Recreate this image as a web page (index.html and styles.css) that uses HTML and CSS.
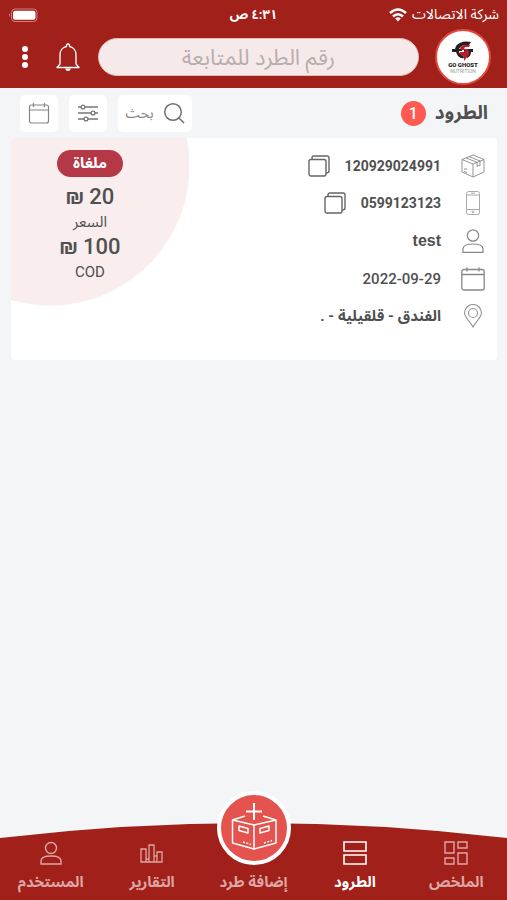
FILE: index.html
```html
<!DOCTYPE html>
<html lang="ar" dir="rtl">
<head>
<meta charset="utf-8">
<meta name="viewport" content="width=device-width, initial-scale=1">
<title>الطرود</title>
<link rel="stylesheet" href="styles.css">
</head>
<body>
<header class="header">
  <div class="status">
    <div class="carrier"><span>شركة الاتصالات</span>
      <svg class="wifi" width="18" height="14" viewBox="0 0 18 14" fill="none" stroke="#fff" stroke-width="2.6"><path d="M1 5Q9-2 17 5M4 8.500Q9 4 14 8.500"/><path d="M6.200 10.500Q9 8 11.800 10.500L9 13.500z" fill="#fff" stroke="none"/></svg>
    </div>
    <time class="clock">٤:٣١ ص</time>
    <svg class="battery" width="30" height="14" viewBox="0 0 30 14"><rect x="3.500" y="1" width="25.500" height="12.500" rx="3.500" fill="none" stroke="#d0827c"/><rect x="5" y="2.700" width="22.500" height="9" rx="2" fill="#fff"/><path d="M2 5Q0 7 2 9z" fill="#d0827c"/></svg>
  </div>
  <div class="toolbar">
    <a class="avatar" href="#" aria-label="GO GHOST">
      <svg width="22" height="20" viewBox="0 0 22 20"><path d="M19 1Q9-1 4 5L3 8H0V11H4L6 15Q9 18 12 17L11 14Q7 13 7 10H10V8H7Q9 4 14 4H17z" fill="#222"/><path d="M12 8H21V11H19Q19 15 15 17L14 14Q16 13 16 11H12z" fill="#222"/><path d="M18 4Q10 3 8 7L9 9H13L12 11H8Q8 15 12 16V20L15 16Q18 13 17 10L15 8H12L13 6H17z" fill="#b51f2a"/></svg>
      <span class="brand">GO GHOST</span><span class="brand-sub">NUTRITION</span>
    </a>
    <input class="track" type="text" placeholder="رقم الطرد للمتابعة" aria-label="رقم الطرد للمتابعة">
    <button class="bare" aria-label="الإشعارات"><svg width="24" height="28" viewBox="0 0 24 28" fill="none" stroke="#fff" stroke-width="1.300" stroke-linejoin="round"><path d="M1 24.500H23L20 21V12C20 7 17 4 13.500 3.500V2Q12 0 10.500 2V3.500C7 4 4 7 4 12V21z"/><path d="M9 25.500H15Q14 28 12 28T9 25.500z" fill="#fff" stroke="none"/></svg></button>
    <button class="bare dots" aria-label="المزيد"><svg width="8" height="24" viewBox="0 0 8 24" fill="#fff"><circle cx="4" cy="4" r="3"/><circle cx="4" cy="12" r="3"/><circle cx="4" cy="20" r="3"/></svg></button>
  </div>
</header>
<main class="content">
  <div class="heading">
    <h1>الطرود</h1><span class="count">1</span>
    <div class="actions">
      <button class="tool search"><svg width="22" height="22" viewBox="0 0 22 22" fill="none" stroke="#6e6e6e" stroke-width="1.500"><circle cx="10" cy="10" r="8.300"/><path d="M16 16L21 21"/></svg><span>بحث</span></button>
      <button class="tool" aria-label="تصفية"><svg width="20" height="20" viewBox="0 0 20 20" fill="#fff" stroke="#777" stroke-width="1.300"><path d="M0 4H20M0 10H20M0 16H20"/><circle cx="5" cy="4" r="1.900"/><circle cx="15" cy="10" r="1.900"/><circle cx="8" cy="16" r="1.900"/></svg></button>
      <button class="tool" aria-label="التاريخ"><svg width="22" height="22" viewBox="0 0 22 22" fill="none" stroke="#858585" stroke-width="1.200"><rect x="1.500" y="3" width="19" height="18" rx="2"/><path d="M1.500 8H20.500M5.500 1V5M16.500 1V5"/></svg></button>
    </div>
  </div>
  <article class="card">
    <ul class="details">
      <li><svg class="icon" viewBox="0 0 24 24" fill="none" stroke="#888" stroke-width=".9" stroke-linejoin="round"><path d="M12 1L23 5.500V18L12 23L1 18V5.500zM1 5.500L12 10L23 5.500M12 10V23M5 4L16 8.300M8 2.600L19 7M16 8.300V12.500L17.500 11.500L19 11.800V7M3 15H6M3 17.500L6 18.500"/></svg><b class="number">120929024991</b><button class="bare copy" aria-label="نسخ رقم الطرد"><svg width="22" height="22" viewBox="0 0 22 22" fill="none" stroke="#666" stroke-width="1.400"><rect x="1" y="4.500" width="17" height="16.500" rx="2"/><path d="M4 4V3Q4 1 6 1H19Q21 1 21 3V16Q21 18 18 18"/></svg></button></li>
      <li><svg class="icon" viewBox="0 0 24 24" fill="none" stroke="#aaa" stroke-width="1"><rect x="5.500" y=".5" width="13" height="23" rx="2"/><path d="M5.500 4H18.500M5.500 18.500H18.500M10 2.200H14"/><circle cx="12" cy="21" r="1"/></svg><b class="number">0599123123</b><button class="bare copy" aria-label="نسخ رقم الهاتف"><svg width="22" height="22" viewBox="0 0 22 22" fill="none" stroke="#666" stroke-width="1.400"><rect x="1" y="4.500" width="17" height="16.500" rx="2"/><path d="M4 4V3Q4 1 6 1H19Q21 1 21 3V16Q21 18 18 18"/></svg></button></li>
      <li><svg class="icon" viewBox="0 0 24 24" fill="none" stroke="#888" stroke-width="1.200"><circle cx="12" cy="6.500" r="5.700"/><path d="M2 23.300V20C2 16.500 6 15 12 15S22 16.500 22 20V23.300z"/></svg><b class="latin">test</b></li>
      <li><svg class="icon" viewBox="0 0 24 24" fill="none" stroke="#888" stroke-width="1.300"><rect x=".8" y="2.500" width="22.400" height="20.500" rx="2"/><path d="M1 7.500H23M6 .5V4.500M18 .5V4.500"/></svg><b class="date">2022-09-29</b></li>
      <li><svg class="icon" viewBox="0 0 24 24" fill="none" stroke="#999" stroke-width="1.200"><path d="M12 23C10 19 3.500 13 3.500 9A8.500 8.500 0 0 1 20.500 9C20.500 13 14 19 12 23z"/><circle cx="12" cy="9" r="4.500"/></svg><b>الفندق - قلقيلية - .</b></li>
    </ul>
    <div class="price">
      <span class="badge">ملغاة</span>
      <strong dir="ltr">₪ 20</strong><span>السعر</span>
      <strong dir="ltr">₪ 100</strong><span>COD</span>
    </div>
  </article>
</main>
<nav class="nav">
  <svg class="curve" viewBox="0 0 507 78" preserveAspectRatio="none"><path d="M0 16Q253-14 507 16V78H0z" fill="#a12019"/></svg>
  <a href="#"><svg width="24" height="24" viewBox="0 0 24 24" fill="none" stroke="currentColor" stroke-width="1.400"><path d="M1 1H10V12H1zM14 1H23V7H14zM1 17H10V23H1zM14 12H23V23H14z"/></svg><span>الملخص</span></a>
  <a class="active" href="#" aria-current="page"><svg width="24" height="24" viewBox="0 0 24 24" fill="none" stroke="currentColor" stroke-width="1.600"><path d="M1 1H23V10H1zM1 14H23V23H1z"/></svg><span>الطرود</span></a>
  <a class="add" href="#"><span class="disc"><svg width="46" height="56" viewBox="16 9 46 56" fill="none" stroke="#fff" stroke-width="1.500" stroke-linejoin="round"><path d="M39 12V29M31 20.500H47" stroke-width="2"/><path d="M30 25L17.500 29V52L39 58L61 52V29L48 25M17.500 29L39 34L61 29M39 34V58M24 35L33 37.500V42L24 39.500zM54 35L45 37.500V42L54 39.500z"/><path d="M28 51L36 53.500M49 52L57 49.500" stroke-dasharray="2 1.500"/></svg></span><span>إضافة طرد</span></a>
  <a href="#"><svg width="24" height="24" viewBox="0 0 24 24" fill="none" stroke="currentColor" stroke-width="1.300"><path d="M1 8H6V21H1zM9 4H14V21H9zM17 11H22V21H17zM6 18H9V21H6zM14 15H17V21H14z"/></svg><span>التقارير</span></a>
  <a href="#"><svg width="24" height="24" viewBox="0 0 24 24" fill="none" stroke="currentColor" stroke-width="1.400"><circle cx="12" cy="7" r="5.500"/><path d="M2 23V20C2 16.500 6 15 12 15S22 16.500 22 20V23z"/></svg><span>المستخدم</span></a>
</nav>
</body>
</html>
```
FILE: styles.css
```css
* { box-sizing: border-box; }
body { margin: 0; min-height: 100vh; display: flex; flex-direction: column; background: #f3f5f7; color: #505050; font-family: Roboto, "Noto Sans Arabic", "DejaVu Sans", sans-serif; font-size: 14px; }
button, input { font: inherit; color: inherit; }
svg { display: block; flex: none; }
a { text-decoration: none; }
.bare { border: 0; background: none; padding: 0; }
.header { background: #a12019; color: #fff; }
.status { display: grid; grid-template-columns: 1fr auto 1fr; align-items: center; height: 26px; padding: 0 8px; font-size: 14px; }
.carrier { display: flex; align-items: center; gap: 5px; white-space: nowrap; }
.clock { font-size: 13px; font-weight: 700; }
.battery { justify-self: end; }
.toolbar { display: flex; align-items: center; height: 62px; padding: 0 16px 0 21px; }
.dots { margin-right: 27px; }
.avatar { width: 56px; height: 56px; margin-left: 16px; border-radius: 50%; border: 2px solid #e3483f; background: #fff; display: flex; flex-direction: column; align-items: center; justify-content: center; flex: none; direction: ltr; }
.brand { color: #222; font-size: 6px; line-height: 8px; font-weight: 900; }
.brand-sub { color: #999; font-size: 5px; line-height: 4px; }
.track { flex: 1; min-width: 0; height: 38px; border: 1px solid #e9b9b6; border-radius: 19px; background: #f6e9e9; text-align: center; font-size: 22px; margin-left: 18px; padding: 0 16px; }
.track::placeholder { color: #b9adad; opacity: 1; }
.content { flex: 1; padding: 0 10px 0 11px; }
.heading { display: flex; align-items: center; height: 50px; padding: 0 9px; }
.heading h1 { margin: 0; font-size: 19px; font-weight: 700; }
.count { width: 25px; height: 25px; margin-right: 9px; border-radius: 50%; background: #ff5a52; color: #fff; text-align: center; line-height: 25px; font-size: 16px; font-weight: 500; }
.actions { display: flex; gap: 11px; margin-right: auto; }
.tool { height: 37px; width: 38px; padding: 0; border: 0; border-radius: 5px; background: #fff; color: #858585; display: flex; align-items: center; justify-content: center; gap: 9px; font-size: 14px; }
.tool.search { width: 74px; }
.card { display: flex; justify-content: space-between; min-height: 222px; background: #fff; border-radius: 4px; overflow: hidden; }
.details { list-style: none; margin: 0; padding: 9px 12px 25px; display: grid; grid-auto-rows: 1fr; }
.details li { display: flex; align-items: center; font-size: 15px; }
.details .number { font-size: 14px; }
.details .date { font-weight: 500; }
.details .latin { font-family: "Liberation Sans", sans-serif; font-size: 16px; }
.icon { width: 24px; height: 24px; margin-left: 20px; }
.copy { margin-right: 15px; }
.price { width: 178px; padding: 12px 20px 0 0; background: radial-gradient(circle at 39px 28px, #f9eded 139px, #fff 140px); display: flex; flex-direction: column; align-items: center; }
.price span { font-size: 15px; line-height: 22px; }
.price strong { font-size: 22px; line-height: 28px; font-weight: 500; }
.price .badge { width: 66px; height: 27px; line-height: 26px; margin-bottom: 6px; text-align: center; background: #b53846; color: #fff; border-radius: 14px; font-weight: 700; }
.nav { position: relative; display: grid; grid-template-columns: repeat(5, 1fr); grid-template-rows: 78px; }
.nav a { position: relative; display: flex; flex-direction: column; align-items: center; justify-content: flex-end; gap: 6px; padding-bottom: 7px; color: #dda6a3; font-size: 15px; line-height: 22px; font-weight: 700; white-space: nowrap; }
.nav a.active { color: #fff; }
.curve { position: absolute; inset: 0; width: 100%; height: 100%; }
.disc { width: 74px; height: 74px; border: 4px solid #fff; border-radius: 50%; background: #e4534e; display: flex; align-items: center; justify-content: center; flex: none; }
```
